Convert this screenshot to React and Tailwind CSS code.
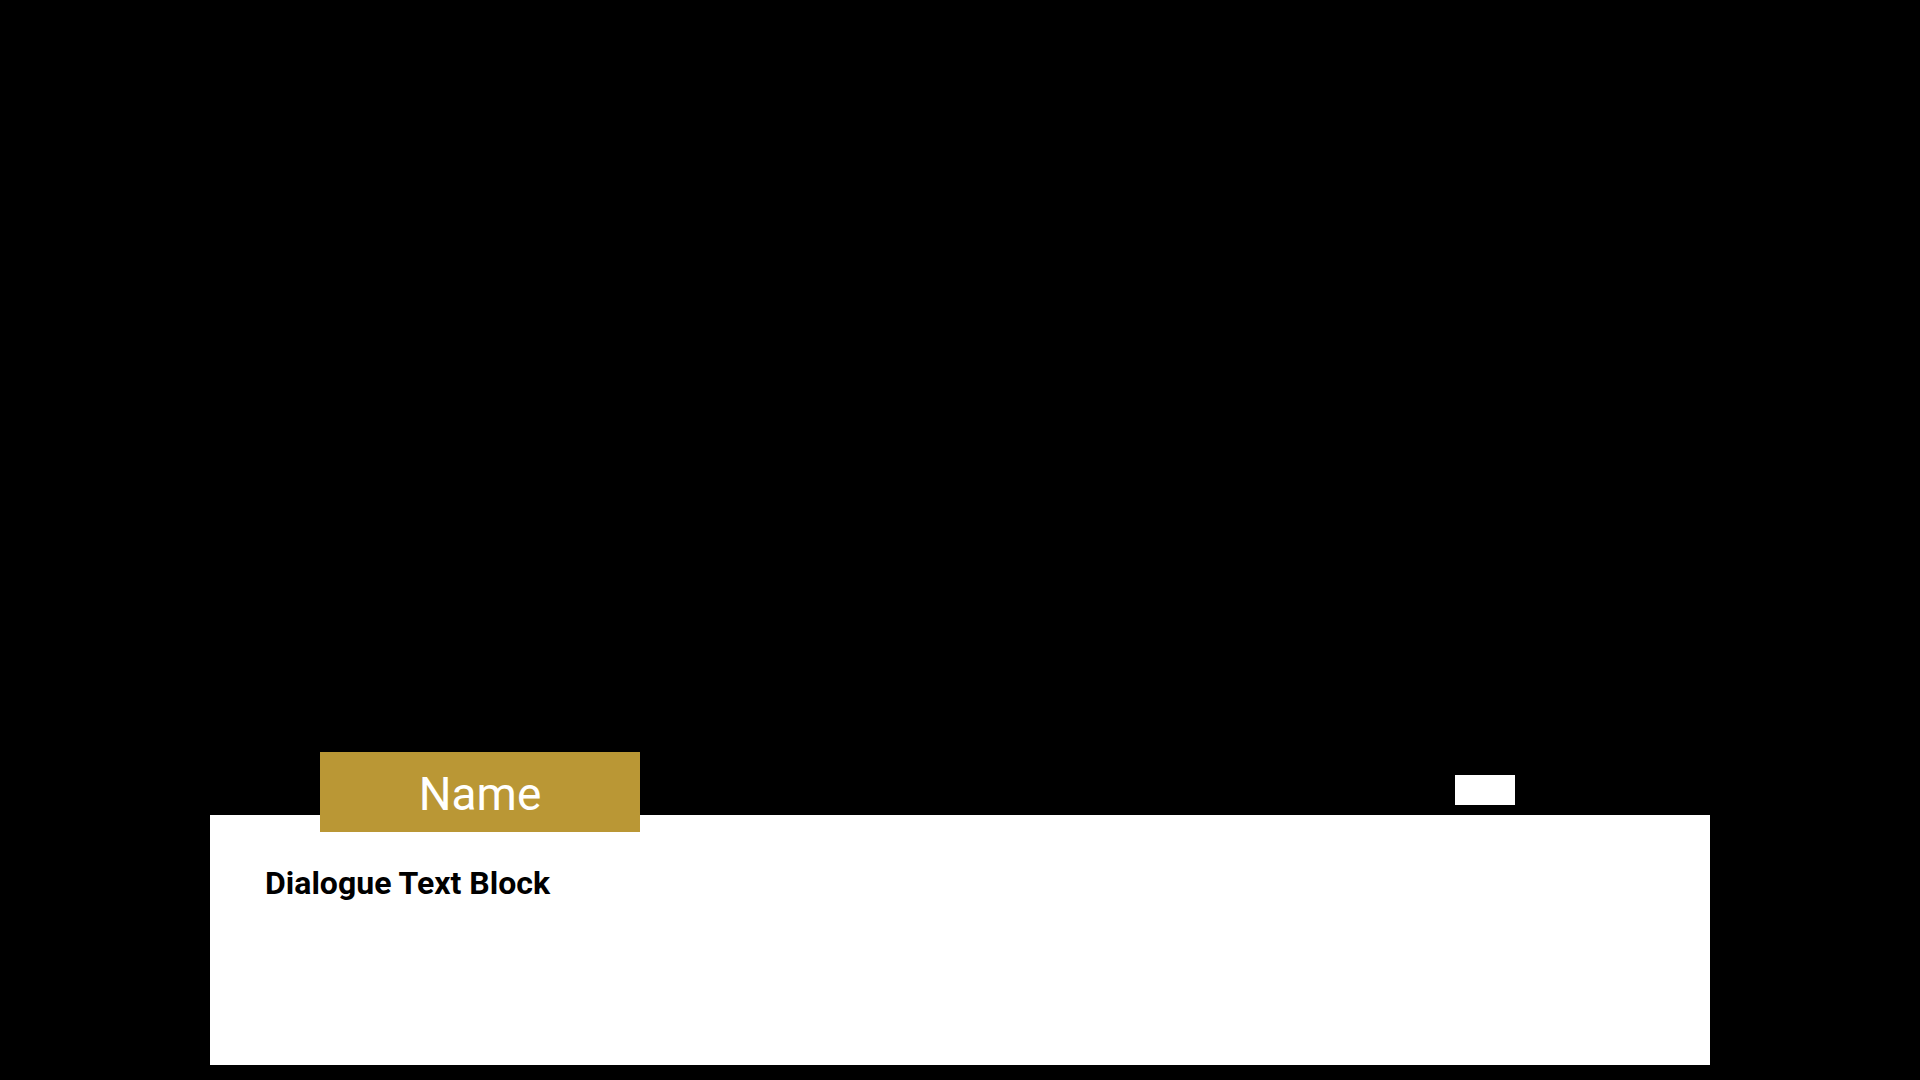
import React from "react";

export default function App() {
  return (
    <div className="w-[1920px] h-[1080px] bg-black flex flex-col justify-end overflow-hidden font-['Roboto',sans-serif]">
      <div className="relative mx-auto mb-[15px] w-[1500px] h-[250px] bg-white">
        {/* speaker tag */}
        <div className="absolute left-[110px] top-[-63px] w-[320px] h-[80px] bg-[#ba9735] flex items-center justify-center pt-[3px]">
          <span className="text-white text-[46px] leading-none">Name</span>
        </div>

        {/* small marker */}
        <div className="absolute left-[1245px] top-[-40px] w-[60px] h-[30px] bg-white" />

        <div className="pt-[50px] pl-[55px]">
          <p className="text-black text-[32px] leading-[36px] font-bold">Dialogue Text Block</p>
        </div>
      </div>
    </div>
  );
}
